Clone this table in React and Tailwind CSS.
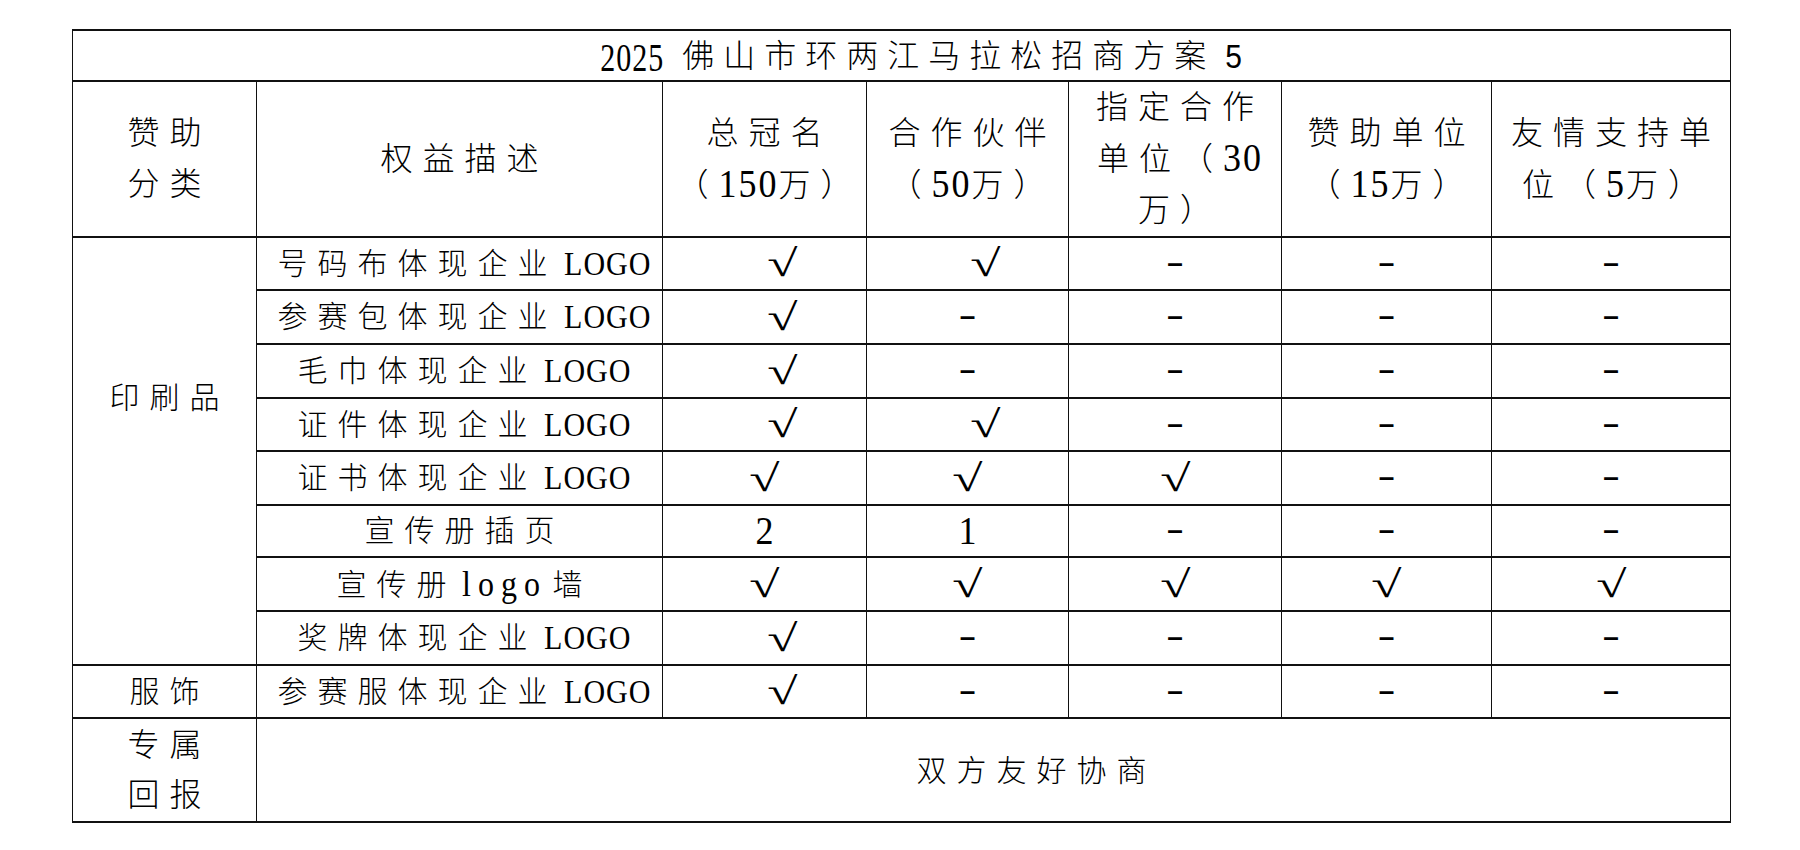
import React from 'react';

// 2025 佛山马拉松 招商权益表

const splitRuns = (text) => text.split(/([A-Za-z0-9]+| )/).filter((s) => s);
const isLatin = (s) => /^[A-Za-z0-9]+$/.test(s);

function Txt({ text, latin, space = '' }) {
  return (
    <>
      {splitRuns(text).map((run, i) => {
        if (isLatin(run)) {
          return (
            <span key={i} className={`inline-block ${latin}`}>
              {run}
            </span>
          );
        }
        if (run === ' ') {
          return (
            <span key={i} className={space}>
              {' '}
            </span>
          );
        }
        return <span key={i}>{run}</span>;
      })}
    </>
  );
}

const header = [
  ['赞助', '分类'],
  ['权益描述'],
  ['总冠名', '（150万）'],
  ['合作伙伴', '（50万）'],
  ['指定合作', '单位（30', '万）'],
  ['赞助单位', '（15万）'],
  ['友情支持单', '位（5万）'],
];

// V = 勾（略偏右），v = 勾（居中），- = 横杠
const rows = [
  { item: '号码布体现企业 LOGO', h: 'h-[53px]', cells: ['V', 'V', '-', '-', '-'] },
  { item: '参赛包体现企业 LOGO', h: 'h-[54px]', cells: ['V', '-', '-', '-', '-'] },
  { item: '毛巾体现企业 LOGO', h: 'h-[54px]', cells: ['V', '-', '-', '-', '-'] },
  { item: '证件体现企业 LOGO', h: 'h-[53px]', cells: ['V', 'V', '-', '-', '-'] },
  { item: '证书体现企业 LOGO', h: 'h-[54px]', cells: ['v', 'v', 'v', '-', '-'] },
  { item: '宣传册插页', h: 'h-[52px]', cells: ['2', '1', '-', '-', '-'] },
  { item: '宣传册 logo 墙', h: 'h-[54px]', cells: ['v', 'v', 'v', 'v', 'v'], lower: true },
  { item: '奖牌体现企业 LOGO', h: 'h-[54px]', cells: ['V', '-', '-', '-', '-'] },
];

const cellBase = 'border-x border-y-2 border-[#111] text-center align-middle p-0';

function Mark({ v }) {
  if (v === 'V' || v === 'v') {
    return (
      <span className="inline-block scale-x-[1.45] font-['Liberation_Serif'] font-light text-[38px] leading-none">
        √
      </span>
    );
  }
  if (v === '-') {
    return <span className="font-['Liberation_Sans'] font-bold text-[28px] leading-none">–</span>;
  }
  return <span className="inline-block scale-y-110 font-['Liberation_Serif'] text-[36px] leading-none">{v}</span>;
}

function MarkCell({ v }) {
  return (
    <td className={`${cellBase} ${v === 'V' ? 'pl-[36px]' : ''}`}>
      <Mark v={v} />
    </td>
  );
}

function ItemCell({ text, lower }) {
  return (
    <td className={`${cellBase} pl-[10px] text-[30px] tracking-[10px] leading-none whitespace-nowrap`}>
      {lower ? (
        <Txt text={text} latin="scale-y-110 text-[32px] tracking-[7px]" space="tracking-[-2px]" />
      ) : (
        <Txt text={text} latin="scale-y-110 text-[30px] tracking-[1px]" space="tracking-[-1px]" />
      )}
    </td>
  );
}

export default function App() {
  return (
    <div className="min-h-screen bg-white pl-[72px] pt-[29px] text-black font-light font-['Liberation_Serif','Noto_Sans_CJK_SC',serif]">
      <table className="table-fixed border-collapse w-[1658px]">
        <colgroup>
          <col className="w-[184px]" />
          <col className="w-[406px]" />
          <col className="w-[204px]" />
          <col className="w-[202px]" />
          <col className="w-[213px]" />
          <col className="w-[210px]" />
          <col className="w-[239px]" />
        </colgroup>
        <tbody>
          <tr className="h-[51px]">
            <td colSpan={7} className={`${cellBase} pl-[48px] text-[32px] tracking-[9px] leading-none whitespace-nowrap`}>
              <Txt text="2025 佛山市环两江马拉松招商方案" latin="scale-y-[1.35] text-[30px] tracking-[1px]" space="tracking-[10px]" />
              <span className="tracking-[2px]"> </span>
              <span className="inline-block scale-y-110 font-['Liberation_Sans'] text-[30px]">5</span>
            </td>
          </tr>

          <tr className="h-[153px]">
            {header.map((lines, i) => (
              <td key={i} className={`${cellBase} pl-[10px] text-[32px] tracking-[10px] leading-[51px] whitespace-nowrap`}>
                {lines.map((l, j) => (
                  <div key={j}>
                    <Txt text={l} latin="scale-y-110 text-[36px] tracking-[2px]" />
                  </div>
                ))}
              </td>
            ))}
          </tr>

          {rows.map((r, i) => (
            <tr key={i} className={r.h}>
              {i === 0 && (
                <td rowSpan={6} className={`${cellBase} border-b-0 pl-[10px] text-[30px] tracking-[10px]`}>
                  印刷品
                </td>
              )}
              {i === 6 && <td rowSpan={2} className={`${cellBase} border-t-0`} />}
              <ItemCell text={r.item} lower={r.lower} />
              {r.cells.map((v, j) => (
                <MarkCell key={j} v={v} />
              ))}
            </tr>
          ))}

          <tr className="h-[53px]">
            <td className={`${cellBase} pl-[10px] text-[30px] tracking-[10px]`}>服饰</td>
            <ItemCell text="参赛服体现企业 LOGO" />
            {['V', '-', '-', '-', '-'].map((v, j) => (
              <MarkCell key={j} v={v} />
            ))}
          </tr>

          <tr className="h-[104px]">
            <td className={`${cellBase} pl-[10px] text-[32px] tracking-[10px] leading-[50px]`}>
              <div>专属</div>
              <div>回报</div>
            </td>
            <td colSpan={6} className={`${cellBase} pl-[86px] text-[30px] tracking-[10px]`}>
              双方友好协商
            </td>
          </tr>
        </tbody>
      </table>
    </div>
  );
}
